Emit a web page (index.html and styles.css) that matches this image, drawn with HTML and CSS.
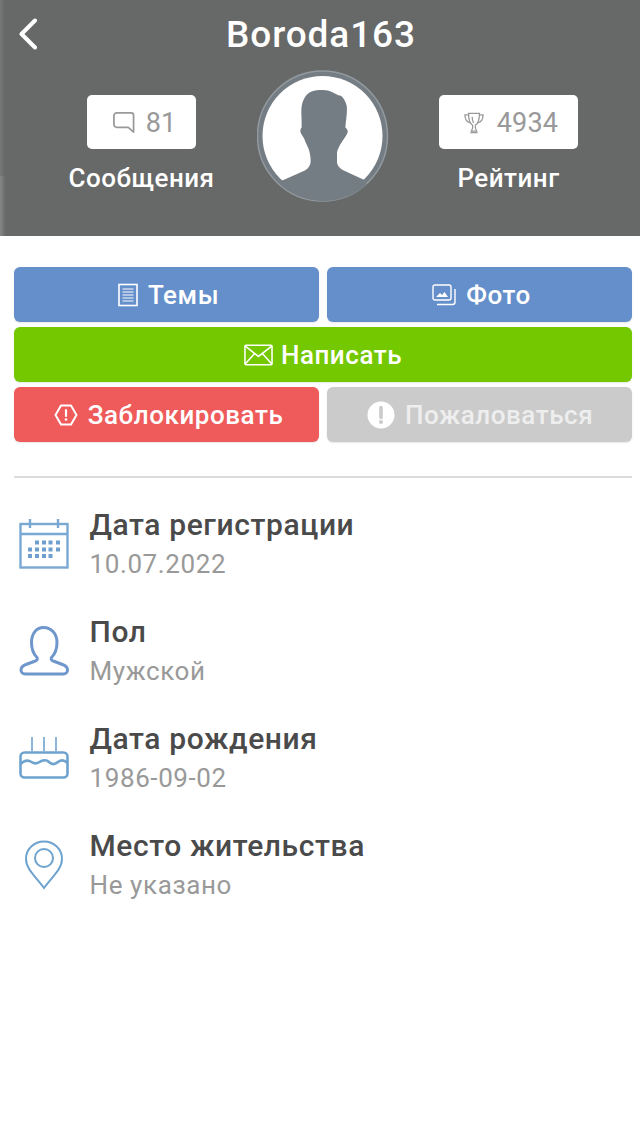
FILE: index.html
```html
<!DOCTYPE html>
<html lang="ru">
<head>
<meta charset="utf-8">
<title>Boroda163</title>
<link rel="stylesheet" href="styles.css">
</head>
<body>
<header class="hero">
  <div class="topbar">
    <svg class="back" width="20" height="32" viewBox="0 0 20 32"><path d="M17 2.500 3.500 16 17 29.500" fill="none" stroke="#fff" stroke-width="4" stroke-linecap="round" stroke-linejoin="round"/></svg>
    <h1 class="name">Boroda163</h1>
  </div>
  <div class="stats">
    <div class="stat stat-left">
      <div class="stat-box box-left">
        <svg width="23" height="23" viewBox="0 0 24 24"><path d="M5 2h15a2.500 2.500 0 0 1 2.500 2.500V22L17 17H5a3 3 0 0 1-3-3V5a3 3 0 0 1 3-3Z" fill="none" stroke="#999" stroke-width="1.800" stroke-linejoin="round"/></svg>
        <span>81</span>
      </div>
      <div class="stat-label">Сообщения</div>
    </div>
    <div class="avatar">
      <svg width="132" height="132" viewBox="0 0 132 132">
        <clipPath id="c"><circle cx="65.500" cy="66" r="65"/></clipPath>
        <circle cx="65.500" cy="66" r="65" fill="#757d84" stroke="#929a9f" stroke-width="1.500"/>
        <circle cx="65.500" cy="66" r="60" fill="#fff"/>
        <path clip-path="url(#c)" transform="translate(1 0)" d="M64.700 20C56 20 50 21.500 46.500 28 43.500 33 43 38 43.500 47L43.700 57.300C42.300 59 42 61 42.800 63 44 65.500 45.500 67 46.300 69 48 74 50.500 77 51.300 81.300 52.500 86 53 90 52.300 94 51 98 48.500 99.500 46.300 100.700L23.700 110.700 20 135H110L108 110.700 84.700 100C81 98 79 95 79 92.300V82.300C80 78 82 75 83.700 72.300 85.500 69.500 88 66.500 89.700 62.300 90 60 88.500 58.500 87.300 57.300 88 50 89.500 42 88.700 35.700 87.500 31 85.500 28 83 25.700 78 25.500 74 20 64.700 20Z" fill="#757d84"/>
      </svg>
    </div>
    <div class="stat">
      <div class="stat-box box-right">
        <svg width="20" height="24" viewBox="0 0 22 24"><g fill="none" stroke="#999" stroke-width="1.400"><path d="M5 1.500h12c0 7-1.500 11-4.500 13-.6 2 .4 4.500 1.500 6.500H8c1.100-2 2.100-4.500 1.500-6.500C6.500 12.500 5 8.500 5 1.500Z"/><path d="M5 3H1c0 4 2 8 6 9M17 3h4c0 4-2 8-6 9M7 22.500h8M9 5c0 3 .5 5 1.500 7"/></g></svg>
        <span>4934</span>
      </div>
      <div class="stat-label">Рейтинг</div>
    </div>
  </div>
</header>

<main class="content">
  <section class="actions">
    <a class="btn btn-blue">
      <svg width="20" height="24" viewBox="0 0 20 24"><g fill="none" stroke="#fff"><rect x="1" y="1.500" width="18" height="21" stroke-width="1.600"/><path d="M4.500 6h11M4.500 9h11M4.500 12h11M4.500 15h11M4.500 18h11" stroke-width="1.200"/></g></svg>
      Темы
    </a>
    <a class="btn btn-blue">
      <svg width="24" height="22" viewBox="0 0 24 22"><g fill="none" stroke="#fff" stroke-width="1.400"><rect x="1" y="1" width="18" height="15" rx="2"/><path d="M23 5v13a2.500 2.500 0 0 1-2.500 2.500H5"/></g><path d="M4 13l4-4 2 2 2.500-3L16 13Z" fill="#fff"/></svg>
      Фото
    </a>
    <a class="btn btn-green btn-wide">
      <svg width="29" height="22" viewBox="0 0 30 22"><g fill="none" stroke="#fff" stroke-width="1.600"><rect x="1" y="1" width="28" height="20" rx="1"/><path d="m1 1.500 14 11 14-11M1 20.500l10-11M29 20.500l-10-11"/></g></svg>
      Написать
    </a>
    <a class="btn btn-red">
      <svg width="24" height="22" viewBox="0 0 24 22"><path d="M7 1.500h10L22.500 11 17 20.500H7L1.500 11Z" fill="none" stroke="#fff" stroke-width="2" stroke-linejoin="round"/><path d="M12 6v6" stroke="#fff" stroke-width="2.200" stroke-linecap="round"/><circle cx="12" cy="15.500" r="1.300" fill="#fff"/></svg>
      Заблокировать
    </a>
    <a class="btn btn-grey">
      <svg width="28" height="28" viewBox="0 0 28 28"><circle cx="14" cy="14" r="13.500" fill="#fff"/><path d="M14 6.500v10" stroke="#cbcbcb" stroke-width="3.600" stroke-linecap="round"/><circle cx="14" cy="21" r="2" fill="#cbcbcb"/></svg>
      Пожаловаться
    </a>
  </section>

  <hr class="divider">

  <ul class="info">
    <li class="info-row">
      <span class="info-icon">
        <svg width="50" height="50" viewBox="0 0 50 50"><g fill="none" stroke="#79a9d3" stroke-width="2.400"><rect x="1.500" y="5" width="47" height="43.500"/><path d="M1.500 15h47M11 0v9M39 0v9"/></g><g fill="#6f9fcf"><rect x="16" y="21.500" width="4" height="4"/><rect x="23" y="21.500" width="4" height="4"/><rect x="29.500" y="21.500" width="4" height="4"/><rect x="37" y="21.500" width="4" height="4"/><rect x="9" y="28.500" width="4" height="4"/><rect x="16" y="28.500" width="4" height="4"/><rect x="23" y="28.500" width="4" height="4"/><rect x="29.500" y="28.500" width="4" height="4"/><rect x="37" y="28.500" width="4" height="4"/><rect x="9" y="35" width="4" height="4"/><rect x="16" y="35" width="4" height="4"/><rect x="23" y="35" width="4" height="4"/><rect x="29.500" y="35" width="4" height="4"/></g></svg>
      </span>
      <div class="info-text"><div class="info-title">Дата регистрации</div><div class="info-value">10.07.2022</div></div>
    </li>
    <li class="info-row">
      <span class="info-icon">
        <svg width="50" height="50" viewBox="0 0 50 50"><path d="M24.500 1.500c8 0 13.500 6.500 13.500 15 0 6-2 11.500-5.500 15-1 2 0 3 3 4l8 3c3 1 5 3 5 5.500 0 2.500-2 4-4 4H6c-2 0-4-1.500-4-4 0-2.500 2-4.500 5-5.500l8-3c3-1 4-2 3-4-3.500-3.500-5.500-9-5.500-15C12.500 8 17 1.500 24.500 1.500Z" fill="none" stroke="#6f97cb" stroke-width="3"/></svg>
      </span>
      <div class="info-text"><div class="info-title">Пол</div><div class="info-value">Мужской</div></div>
    </li>
    <li class="info-row">
      <span class="info-icon">
        <svg width="50" height="50" viewBox="0 0 50 50"><g fill="none" stroke="#6ea3cf" stroke-width="2.600"><rect x="1.500" y="19.500" width="47" height="25" rx="4"/><path d="M1.500 31c4-4 8-4 11-2s5 2 8 0 7-2.500 9.500 0 6 2.500 9 0 6-2.500 9.500 1"/><path d="M13 4v14M25 4v14M37 4v14" stroke-width="2" stroke-opacity=".8"/></g></svg>
      </span>
      <div class="info-text"><div class="info-title">Дата рождения</div><div class="info-value">1986-09-02</div></div>
    </li>
    <li class="info-row">
      <span class="info-icon">
        <svg width="50" height="50" viewBox="0 0 50 50"><g fill="none" stroke="#6ea3cf" stroke-width="2"><path d="M25 48C17 37 7 29 7 19 7 9 15 1.500 25 1.500S43 9 43 19c0 10-10 18-18 29Z"/><circle cx="25" cy="18" r="9"/></g></svg>
      </span>
      <div class="info-text"><div class="info-title">Место жительства</div><div class="info-value">Не указано</div></div>
    </li>
  </ul>
</main>
</body>
</html>
```
FILE: styles.css
```css
* { box-sizing: border-box; }
html, body { margin: 0; padding: 0; background: #fff; }
body { font-family: Roboto, "Noto Sans", sans-serif; width: 640px; min-height: 1141px; overflow: hidden; }

.hero {
  height: 236px;
  background-color: #676868;
  background-image:
    linear-gradient(90deg, rgba(255,255,255,.12), rgba(255,255,255,0) 6px),
    linear-gradient(90deg, rgba(255,255,255,.1), rgba(255,255,255,0) 5px);
  background-size: 100% 60px, 100% 100%;
  background-position: 0 100%, 0 0;
  background-repeat: no-repeat;
  color: #fff;
}
.topbar { height: 70px; display: flex; align-items: flex-start; position: relative; justify-content: center; }
.back { position: absolute; left: 18px; top: 18px; }
.name { margin: 11px 0 0; font-size: 37px; line-height: 48px; font-weight: 500; letter-spacing: .9px; padding-left: 2px; }

.stats { display: flex; padding-left: 69px; align-items: flex-start; }
.stat { display: flex; flex-direction: column; align-items: center; padding-top: 25px; }
.stat-left { width: 145px; margin-right: 43px; }
.stat-box {
  height: 54px; background: #fff; border-radius: 5px; padding: 1px 0 0 5px;
  display: flex; align-items: center; justify-content: center;
  color: #999; font-size: 27px; letter-spacing: .2px;
}
.box-left { width: 109px; gap: 11px; }
.box-right { width: 139px; gap: 13px; }
.stat-label { margin-top: 13px; font-size: 26px; line-height: 32px; font-weight: 500; letter-spacing: .5px; white-space: nowrap; }
.avatar { width: 132px; height: 132px; margin-right: 50px; }
.avatar svg { display: block; }

.content { padding: 31px 8px 0 14px; }
.actions { display: grid; grid-template-columns: 305px 305px; column-gap: 8px; row-gap: 5px; }
.btn {
  height: 55px; border-radius: 6px; color: #fff; padding-left: 4px;
  display: flex; align-items: center; justify-content: center; gap: 10px;
  font-size: 26px; font-weight: 500; letter-spacing: .55px; box-shadow: 0 1px 2px rgba(0,0,0,.1);
}
.btn-wide { grid-column: 1 / 3; gap: 8px; padding-left: 0; }
.btn-blue { background: #648fca; }
.btn-green { background: #74c800; }
.btn-red { background: #ef5a5a; }
.btn-grey { background: #cbcbcb; color: #eee; padding-left: 1px; }

.divider { margin: 34px 0 0; width: 618px; height: 2px; border: 0; background: #dcdcdc; }

.info { list-style: none; margin: 27px 0 0; padding: 0; }
.info-row { display: flex; height: 107px; align-items: flex-start; }
.info-icon { width: 75.500px; padding: 14px 0 0 5px; flex: none; }
.info-icon svg { display: block; }
.info-title { font-size: 30px; line-height: 40px; font-weight: 500; color: #4a4a4a; letter-spacing: .6px; }
.info-value { font-size: 26px; line-height: 36px; color: #999; letter-spacing: .6px; padding-top: 1px; }
```
